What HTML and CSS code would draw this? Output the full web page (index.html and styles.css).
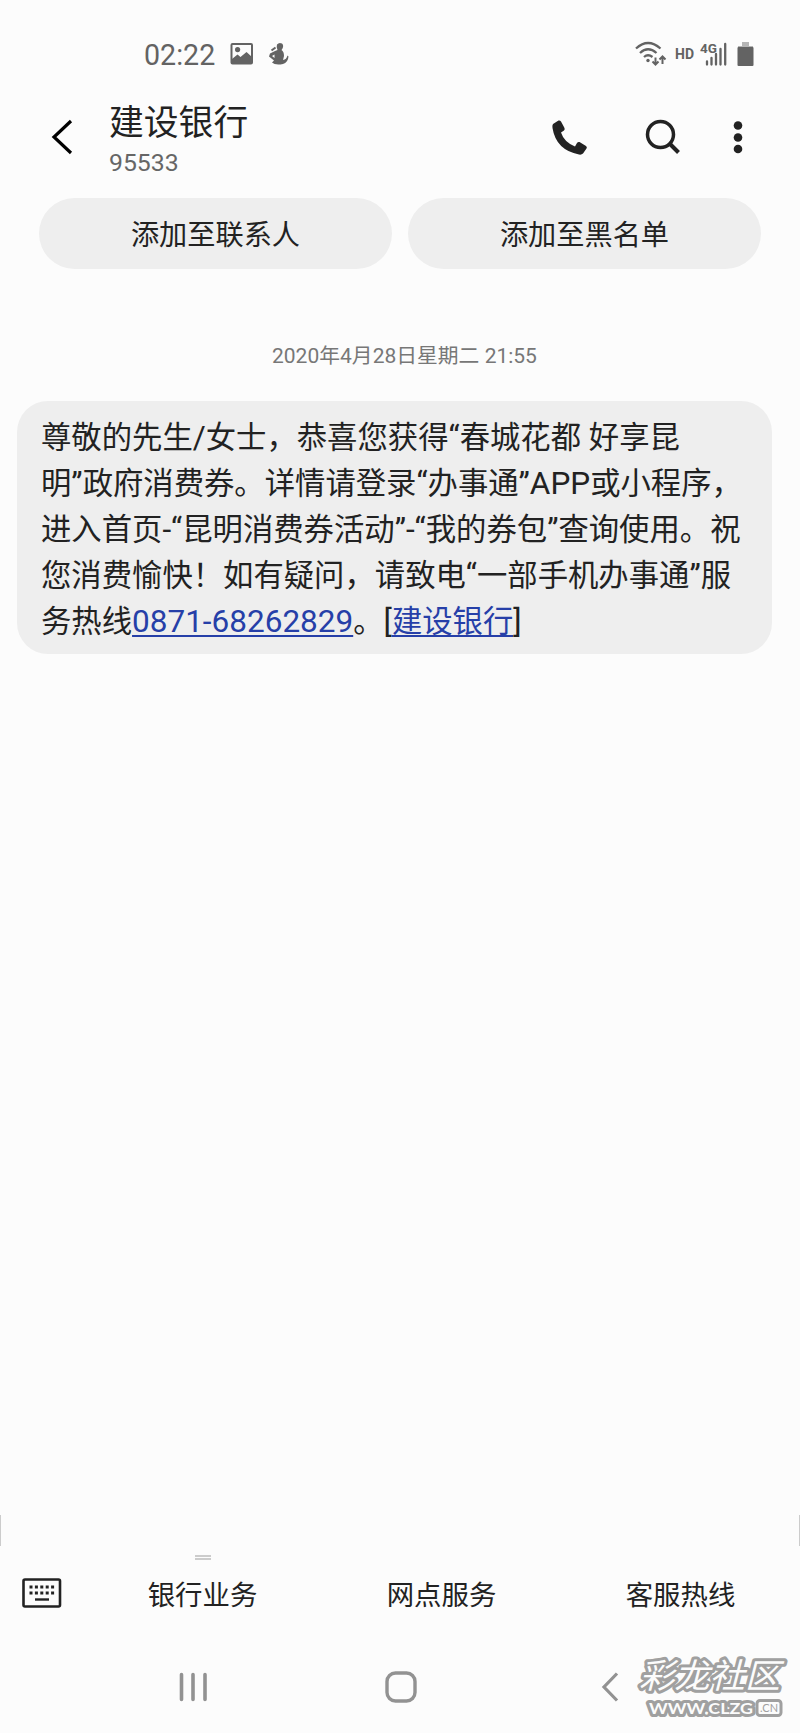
FILE: index.html
```html
<!DOCTYPE html>
<html lang="zh-CN">
  <head>
    <meta charset="UTF-8">
    <title>建设银行</title>
    <link rel="stylesheet" href="styles.css">
  </head>

  <body>
    <div class="phone">
      <div class="statusbar">
        <span class="clock">02:22</span>
        <svg class="icon-image" width="24" height="24" viewBox="0 0 24 24">
          <rect x="1.5" y="2" width="20.5" height="19.5" rx="1" fill="none" stroke="#636363" stroke-width="2"/>
          <circle cx="7.6" cy="7.6" r="2.6" fill="#636363"/>
          <path d="M2 17l5.5-4.500 3 2.500 6-5 5.500 5v6H2z" fill="#636363"/>
        </svg>
        <svg class="icon-app" width="20" height="24" viewBox="0 0 20 24">
          <path d="M8 2.500Q10 0 13 1.500Q15 3.500 13.500 6.500L12.500 8Q15 9.500 15 14L14 18Q17.500 17.500 18.500 13.500L19.500 14.500Q19 20.500 14 22Q6 23.500 3 20.500L5 18.500L0 14.500L1 11.500L6 9L8.500 8Q7 5.500 8 2.500z" fill="#636363"/>
          <path d="M2.500 8.500L6.500 5.500" stroke="#636363" stroke-width="2"/>
          <path d="M3 14L5.500 12.500L5.500 16z" fill="#fcfcfc"/>
        </svg>
        <div class="signals">
          <svg width="32" height="26" viewBox="0 0 32 26" fill="none" stroke="#636363">
            <path d="M1 7.500Q13 -3.500 25.500 7.500M5 12Q13 4.500 21.500 12M9 16Q13 12.500 17.500 16" stroke-width="2.300"/>
            <circle cx="13" cy="19.500" r="1.700" fill="#636363" stroke="none"/>
            <path d="M20.500 16.500v7M17.500 20.500l3 3 3-3M27.500 23v-7M24.500 18.500l3-3 3 3" stroke-width="2"/>
          </svg>
          <span class="hd">HD</span>
          <svg width="28" height="26" viewBox="0 0 28 26">
            <path d="M7 20.500v3M11.500 17v6.500M16 13v10.500M20.500 8v15.500M25.200 3v20.500" stroke="#636363" stroke-width="2.300" stroke-linecap="round"/>
            <text x="0" y="11.500" class="net">4G</text>
          </svg>
          <svg class="battery" width="17" height="26" viewBox="0 0 17 26">
            <path d="M5 1h7v4h4v3H1V5h4z" fill="#b5b5b5"/>
            <rect x="0.500" y="6" width="16" height="19" rx="1" fill="#636363"/>
          </svg>
        </div>
      </div>

      <div class="header">
        <svg class="back" width="22" height="36" viewBox="0 0 22 36">
          <path d="M20 2L3 18l17 16" fill="none" stroke="#000" stroke-width="3.200"/>
        </svg>
        <div class="contact">
          <div class="name">建设银行</div>
          <div class="number">95533</div>
        </div>
        <svg class="call" width="36" height="36" viewBox="0 0 36 36">
          <path d="M1 5L6.500 1.500Q8 1 9 2.500L12.500 9Q13 10.500 12 11.500L9 13.500Q12 23 23 27.500L25 24Q26 22.500 27.500 23L34 27Q35.500 28 34.500 29.500L31 34.500Q29.500 36 27 35.500Q4 31 .500 9Q0 6.500 1 5z" fill="#222"/>
        </svg>
        <svg class="search" width="36" height="36" viewBox="0 0 36 36">
          <circle cx="15.500" cy="15.500" r="13" fill="none" stroke="#222" stroke-width="3.500"/>
          <path d="M24.500 24.500l9 9" stroke="#222" stroke-width="4"/>
        </svg>
        <svg class="more" width="10" height="34" viewBox="0 0 10 34" fill="#222">
          <circle cx="5" cy="5.500" r="4.300"/>
          <circle cx="5" cy="17.500" r="4.300"/>
          <circle cx="5" cy="29" r="4.300"/>
        </svg>
      </div>

      <div class="actions">
        <div class="pill">添加至联系人</div>
        <div class="pill">添加至黑名单</div>
      </div>

      <div class="date"><span>2020</span>年<span>4</span>月<span>28</span>日星期二<span> 21:55</span></div>

      <div class="bubble">
        <div>尊敬的先生<span>/</span>女士，恭喜您获得<span>“</span>春城花都<span> </span>好享昆</div>
        <div>明<span>”</span>政府消费券。详情请登录<span>“</span>办事通<span>”APP</span>或小程序，</div>
        <div>进入首页<span>-“</span>昆明消费券活动<span>”-“</span>我的券包<span>”</span>查询使用。祝</div>
        <div>您消费愉快！如有疑问，请致电<span>“</span>一部手机办事通<span>”</span>服</div>
        <div>务热线<a href="#"><span>0871-68262829</span></a>。<span>[</span><a href="#">建设银行</a><span>]</span></div>
      </div>

      <div class="edges"><i></i><i></i></div>

      <div class="menu">
        <svg class="keyboard" width="40" height="30" viewBox="0 0 40 30">
          <rect x="1.500" y="1.500" width="36.500" height="27" rx="1.500" fill="none" stroke="#222" stroke-width="2.600"/>
          <path d="M7.500 9h26M7.500 15h26" stroke="#222" stroke-width="3" stroke-dasharray="3 2.400"/>
          <path d="M13 21.500h14" stroke="#222" stroke-width="2.400"/>
        </svg>
        <div class="item"><div class="handle"></div>银行业务</div>
        <div class="item">网点服务</div>
        <div class="item">客服热线</div>
      </div>

      <div class="navbar">
        <svg class="recent" width="30" height="30" viewBox="0 0 30 30">
          <path d="M3.500 2.500v25M15 2.500v25M27 2.500v25" stroke="#929292" stroke-width="3.600" stroke-linecap="round"/>
        </svg>
        <svg class="home" width="32" height="32" viewBox="0 0 32 32">
          <rect x="2" y="2" width="28" height="28" rx="8.500" fill="none" stroke="#929292" stroke-width="3.400"/>
        </svg>
        <svg class="prev" width="18" height="30" viewBox="0 0 18 30">
          <path d="M16 1.500L3 15l13 13.500" fill="none" stroke="#929292" stroke-width="3.200"/>
        </svg>
      </div>

      <svg class="watermark" width="175" height="81" viewBox="-10 -5 175 81">
        <text class="brand" x="6" y="36" textLength="141" lengthAdjust="spacingAndGlyphs">彩龙社区</text>
        <text class="site" x="16" y="62" textLength="104" lengthAdjust="spacingAndGlyphs">WWW.CLZG</text>
        <rect x="124" y="48.500" width="24" height="15" rx="3" fill="#fcfcfc" stroke="#a0a0a0" stroke-width="3"/>
        <text class="cn" x="127" y="60" textLength="18" lengthAdjust="spacingAndGlyphs">.CN</text>
      </svg>
    </div>
  </body>
</html>
```
FILE: styles.css
```css
* {
  box-sizing: border-box;
}

body {
  margin: 0;
  background-color: #fcfcfc;
  color: #222;
  font-family: "Noto Sans CJK SC", sans-serif;
}

svg {
  display: block;
  flex: none;
}

.phone {
  position: relative;
  display: flex;
  flex-direction: column;
  width: 800px;
  height: 1733px;
  overflow: hidden;
}

.statusbar {
  display: flex;
  align-items: center;
  height: 108px;
  padding: 0 46px 0 144px;
  color: #636363;
  font-family: Roboto, sans-serif;
}

.clock {
  width: 86px;
  padding-top: 1px;
  font-size: 28.600px;
  line-height: 34px;
}

.icon-app {
  margin-left: 15px;
}

.signals {
  display: flex;
  align-items: center;
  margin-left: auto;
}

.hd {
  margin: 0 6px 0 8px;
  font-size: 14px;
  font-weight: 700;
}

.net {
  font-size: 13.500px;
  font-weight: 700;
  fill: #636363;
  stroke: #fcfcfc;
  stroke-width: 1px;
  paint-order: stroke;
}

.battery {
  margin-left: 9px;
}

.header {
  display: flex;
  align-items: center;
  height: 58px;
  padding: 0 57px 0 51px;
}

.contact {
  width: 443px;
  margin-left: 36px;
  padding-top: 9px;
}

.name {
  font-size: 34.800px;
  line-height: 42px;
}

.number {
  color: #666;
  font-family: Roboto, sans-serif;
  font-size: 24.800px;
  line-height: 43px;
}

.search {
  margin-left: 57px;
}

.more {
  margin-left: auto;
}

.actions {
  display: flex;
  gap: 16px;
  margin: 32px 39px 0;
}

.pill {
  flex: 1;
  height: 71px;
  border-radius: 36px;
  background-color: #eee;
  font-size: 28.200px;
  line-height: 70px;
  text-align: center;
}

.date {
  margin: 70px 0 0 272px;
  color: #777;
  font-size: 20.800px;
  line-height: 30px;
  white-space: pre;
}

.date span {
  font-family: Roboto, sans-serif;
  font-size: 21px;
}

.bubble {
  width: 755px;
  height: 253px;
  margin: 30px 0 0 17px;
  padding: 11px 0 0 24px;
  border-radius: 31px;
  background-color: #eee;
  font-size: 30.350px;
  line-height: 46px;
}

.bubble div {
  height: 46px;
  white-space: pre;
}

.bubble span {
  font-family: Roboto, sans-serif;
  font-size: 31.500px;
}

.bubble a {
  color: #263fa8;
  text-decoration-thickness: 2px;
  text-underline-offset: 3px;
}

.edges {
  display: flex;
  justify-content: space-between;
  margin-top: auto;
}

.edges i {
  width: 1px;
  height: 31px;
  background-color: #ccc;
}

.menu {
  display: flex;
  align-items: center;
  height: 94px;
  padding-left: 22px;
}

.item {
  position: relative;
  width: 239px;
  font-size: 27.400px;
  line-height: 40px;
  text-align: center;
}

.keyboard + .item {
  margin-left: 21px;
}

.handle {
  position: absolute;
  top: -18px;
  left: 112px;
  width: 16px;
  height: 5px;
  border-top: 2px solid #ccc;
  border-bottom: 2px solid #ccc;
}

.navbar {
  display: flex;
  align-items: center;
  height: 93px;
  padding-left: 178px;
}

.home {
  margin-left: 177px;
}

.prev {
  margin-left: 184px;
}

.watermark {
  position: absolute;
  top: 1647px;
  left: 623px;
}

.watermark text {
  fill: #fcfcfc;
  stroke: #a0a0a0;
  stroke-width: 6px;
  stroke-linejoin: round;
  paint-order: stroke;
}

.brand {
  font-size: 34px;
  font-style: italic;
}

.site {
  font-family: Lato, sans-serif;
  font-size: 16px;
  font-weight: 700;
}

.watermark .cn {
  fill: #a0a0a0;
  stroke: none;
  font-family: Lato, sans-serif;
  font-size: 12px;
}
```
